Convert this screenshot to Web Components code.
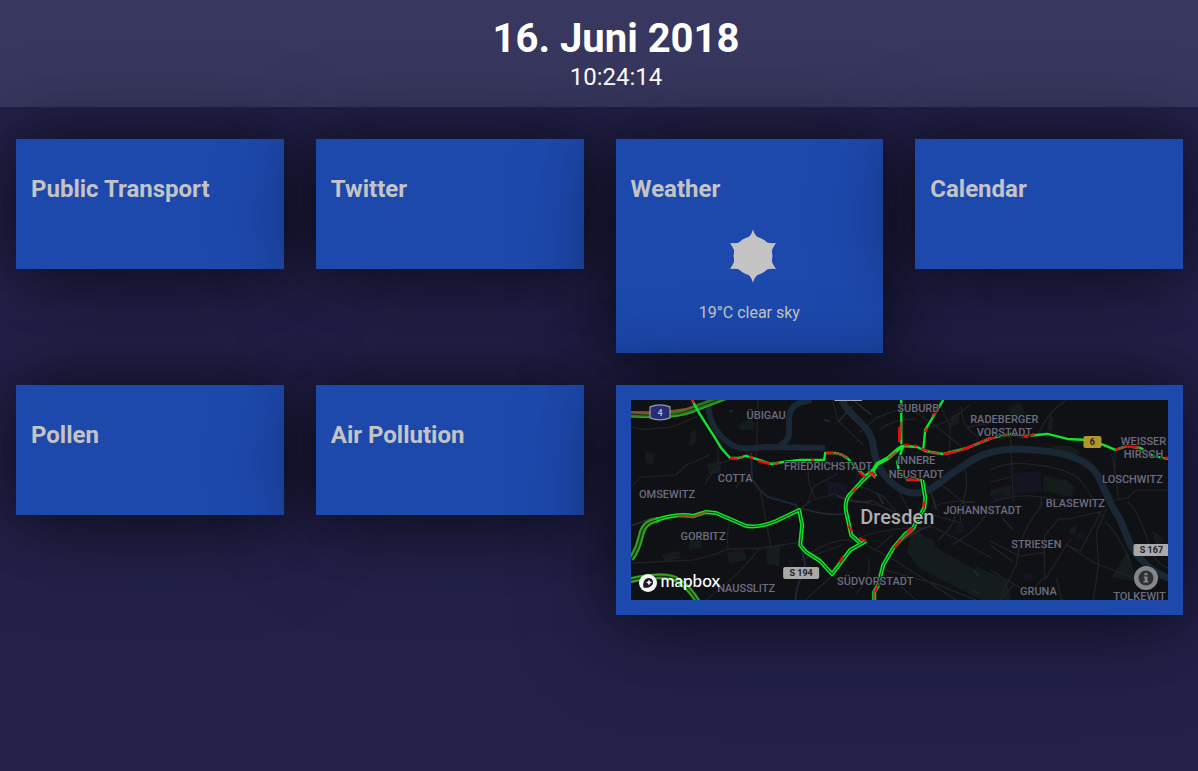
<!DOCTYPE html>
<html lang="de">
<head>
<meta charset="utf-8">
<meta name="viewport" content="width=device-width, initial-scale=1">
<title>Dashboard Dresden</title>
<style>
  html { background: #23214a; }
  body { margin: 0; font-family: Roboto, sans-serif; font-size: 16px; color: #c4c4c4; }
</style>
</head>
<body>
<dash-app></dash-app>

<template id="app-template">
  <style>
    :host { display: block; min-height: 100vh; background: #23214a; }
    main {
      display: grid;
      grid-template-columns: repeat(4, minmax(0, 1fr));
      gap: 32px;
      align-items: start;
      padding: 32px 15px 32px 16px;
    }
    .wide { grid-column: span 2; }
  </style>
  <dash-header date="16. Juni 2018" time="10:24:14"></dash-header>
  <main>
    <dash-card heading="Public Transport"></dash-card>
    <dash-card heading="Twitter"></dash-card>
    <dash-card heading="Weather"><weather-info>19°C clear sky</weather-info></dash-card>
    <dash-card heading="Calendar"></dash-card>
    <dash-card heading="Pollen"></dash-card>
    <dash-card heading="Air Pollution"></dash-card>
    <dash-card class="wide"><traffic-map></traffic-map></dash-card>
  </main>
</template>

<template id="header-template">
  <style>
    :host { display: block; background: #38375f; color: #fff; text-align: center; }
    header { padding: 15px 0 15px 34px; }
    h1 { margin: 0; font-size: 40px; line-height: 48px; font-weight: 700; }
    time { display: block; font-size: 24px; line-height: 29px; }
  </style>
  <header><h1></h1><time></time></header>
</template>

<template id="card-template">
  <style>
    :host {
      display: block;
      position: relative;
      box-sizing: border-box;
      min-height: 130px;
      padding: 15px;
      background: #1d49ad;
      box-shadow: 0 0 60px rgba(0, 0, 0, .45), 0 12px 100px rgba(0, 0, 0, .4);
    }
    h2 { margin: 20px 0 18px; font-size: 24px; line-height: 30px; font-weight: 700; }
  </style>
  <h2></h2>
  <slot></slot>
</template>

<template id="weather-template">
  <style>
    :host { display: block; padding-top: 7px; text-align: center; }
    svg { display: block; margin: 0 auto; width: 54px; height: 54px; fill: #c4c4c4; }
    p { margin: 20px 0 15px; line-height: 20px; }
  </style>
  <svg viewBox="0 0 54 54" role="img" aria-label="Sun">
    <circle cx="31" cy="27" r="19.4"/>
    <path transform="translate(1 0)" d="M30 .5Q31.8 7 37 10Q42 15 53 14Q48 21 47.5 27Q48 33 53 40Q42 39 37 44Q31.800 47 30 53.500Q28.200 47 23 44Q18 39 7 40Q12 33 12.500 27Q12 21 7 14Q18 15 23 10Q28.200 7 30 .5Z"/>
  </svg>
  <p><slot></slot></p>
</template>

<template id="map-template">
  <style>
    :host { display: block; position: relative; height: 200px; overflow: hidden; background: #101115; }
    .map { display: block; width: 100%; height: 100%; }
    .map path { fill: none; stroke-linejoin: round; stroke-linecap: butt; }
    .map .park path { fill: #141d1c; }
    .map .built path { fill: #141422; }
    .water path { stroke: #1a2735; stroke-width: 7; }
    .minor path { stroke: #222329; stroke-width: 1.2; }
    .major path { stroke: #29292f; stroke-width: 1.5; }
    .motorway path { stroke: #297c1d; stroke-width: 6; }
    .motorway .lane { stroke: #36a421; stroke-width: 1.4; }
    .motorway .gap { stroke: #142b14; stroke-width: 1; }
    .motorway .slow { stroke: #87512b; stroke-width: 2; }
    .traffic path { stroke: #0fe52a; stroke-width: 2.4; }
    .traffic .double { stroke-width: 4; }
    .traffic .gap { stroke: #143f19; stroke-width: 1; }
    .traffic .slow { stroke: #91532b; }
    .traffic .jam { stroke: #ee0810; }
    .map text { font-family: Roboto, sans-serif; text-anchor: middle; paint-order: stroke; stroke: #101115; stroke-width: 1.5; }
    .places { font-size: 11px; font-weight: 500; fill: #6c6c80; }
    .places .city { font-size: 20px; fill: #afafb1; }
    .map .signs text { font-size: 9px; font-weight: 700; stroke: none; fill: #222; }
    .logo {
      position: absolute; left: 8px; bottom: 5px;
      display: flex; align-items: center; gap: 4px;
      color: #fff; text-decoration: none;
      font: 500 17px/20px Lato, sans-serif;
    }
    .logo span { padding-bottom: 4px; }
    .logo svg { display: block; width: 18px; height: 18px; }
    button {
      position: absolute; right: 10px; bottom: 10px;
      width: 24px; height: 24px; padding: 0; border: 0; background: none;
    }
    button svg { display: block; width: 24px; height: 24px; }
  </style>
  <svg class="map" viewBox="0 0 537 200" preserveAspectRatio="xMidYMid slice" role="group" aria-label="Traffic map of Dresden">
    <g class="park">
      <path d="M280 133L287 130 294 138 301 139 304 147 368 184 373 200 350 200 288 168 276 152Z"/>
      <path d="M60 32L66 30 64 44 58 46ZM76 64L90 61 89 73 78 74ZM110 23L118 18 125 24 121 31 108 29ZM59 135L72 130 70 148 58 150ZM136 147L149 145 148 166 135 164ZM14 52L24 54 22 64 15 63ZM30 155L48 151 50 158 34 161ZM96 152L113 150 115 160 98 163Z"/>
      <path d="M412 76L435 80 444 87 440 97 412 91ZM359 90L380 85 379 96 359 96ZM420 46L440 46 449 53 438 57 421 53ZM376 8L389 3 394 14 381 18ZM320 16L328 12 328 24 318 26ZM480 177L496 151 502 170 512 183ZM520 130L533 139 525 147ZM507 143L516 146 512 154 506 150Z"/>
      <path d="M344 166L375 180 380 200 352 198ZM418 12L422 18 421 32 416 30ZM439 128L446 125 444 134 438 134Z"/>
    </g>
    <g class="built">
      <path d="M382 73L409 71 410 92 383 94ZM195 80L216 85 217 100 198 98ZM325 125L332 123 333 133 323 133ZM361 94L373 93 372 102 362 101ZM392 172L403 175 400 181 391 178ZM446 133L453 131 452 139 445 139ZM225 70L235 72 236 83 224 82ZM287 112L296 110 296 122 289 121ZM157 160L163 159 163 166 157 166Z"/>
    </g>
    <g class="minor">
      <path d="M0 26C12 33 22 27 33 28C45 28 57 19 66 17M0 86C8 83 5 75 14 77L45 75 55 65 79 55M87 46V64L120 53M127 0L125 60M74 85Q78 73 90 67M0 163C30 162 48 160 62 160Q82 156 96 149L129 148 170 142M129 148L106 174 75 200M129 90L140 148M97 148Q94 126 102 120M105 88L115 72M170 108L181 100 205 94M178 60Q174 80 184 98M175 106L183 86 206 74"/>
      <path d="M181 152Q202 138 222 140Q255 126 293 128M170 160L211 145M174 200L206 171M201 176L222 188M218 130L233 144 260 158 325 200M225 193Q243 175 236 157M244 150L261 135M251 169L305 184 345 200M267 184L285 200M214 98L252 107 267 113 300 126 327 140 360 158M225 84L251 96 265 111M240 100L271 118M257 70L281 117M292 112L329 123 329 106Q339 88 333 66M300 108Q312 101 331 101M305 82Q321 91 340 111M307 140Q321 128 325 114M320 145Q345 132 356 112M232 45L207 21 201 0M228 33L245 18 267 10M248 30Q263 18 285 19M278 8L302 24 333 49M293 29Q322 22 338 5M307 1L319 27 318 60M330 7Q330 28 348 37M335 28Q345 25 365 22"/>
      <path d="M435 0Q416 12 407 34M379 35L382 102M359 70Q379 60 405 65Q436 69 448 79L465 104M359 82L380 77M359 103Q380 93 410 97L455 103Q463 96 470 109M410 97V106Q388 132 385 165L371 193M359 141L388 156 414 152M359 170L394 191M472 111L437 119 427 119 413 136V180M400 192L411 179H414L435 145 449 151 470 111M435 145L463 163 503 178M475 109L465 132 467 164 462 200M474 122Q490 137 500 167M480 54Q485 74 487 100M484 100L496 98 505 90H537M496 102Q506 109 516 140Q520 161 537 168M382 130L371 118M368 200L382 185M484 50L483 70M505 45V57M359 145L382 162M430 200L425 178M440 138L434 146"/>
    </g>
    <g class="major">
      <path d="M0 126L21 118M207 22L221 6M205 95Q224 105 240 101M170 108Q193 116 213 114M222 0L240 15M290 80Q301 90 305 110M331 102L343 102M300 126Q286 129 270 142"/>
    </g>
    <g class="water">
      <path d="M77 0Q77 26 94 40C105 51 117 49 135 47L194 48M148 46C166 37 153 23 160 10C165 2 172 2 180 0" style="stroke-width:6"/>
      <path d="M211 0C217 18 240 24 242 46C246 78 270 93 283 93C302 93 309 80 326 70C343 58 354 51 380 49C416 50 455 53 467 77C475 93 479 106 488 118L500 147C510 162 522 173 537 178"/>
      <path style="stroke-width:2" d="M120 53L121 79Q130 93 137 97L165 105 171 125 170 145 174 164 166 188 164 200M102 10L98 12M193 20L199 21M246 93L252 104M342 169L347 176M341 190L347 193"/>
    </g>
    <g class="motorway">
      <path d="M0 14Q42 18 59 10L94-3"/>
      <path class="gap" d="M0 14Q42 18 59 10L94-3"/>
      <path class="slow" d="M0 12Q40 14 67 6"/>
      <path class="lane" d="M0 17Q43 19 60 13L96-1"/>
      <path d="M0 159Q7 149 10 135T27 120"/>
      <path class="gap" d="M0 159Q7 149 10 135T27 120"/>
      <path class="lane" d="M-2 158Q5 149 8 135T25 119M2 160Q9 150 12 136T29 121"/>
      <path d="M0 180Q37 172 48 181Q58 187 67 202"/>
      <path class="gap" d="M0 180Q37 172 48 181Q58 187 67 202"/>
      <path class="lane" d="M0 178Q38 170 50 180Q60 187 69 202M0 182Q37 174 47 183Q57 189 65 202"/>
    </g>
    <g class="traffic">
      <path d="M61 0L68 13 82 35 90 48 99 58 108 58 115 56 128 60 140 64 152 62 169 60 193 60 194 53 204 53 211 55 217 59 226 69 234 76 241 70 245 76"/>
      <path class="double" d="M25 120Q48 113 62 116L75 112 85 113 115 126Q128 128 145 121L168 110 171 125 169 145 175 152 189 161 201 174 219 150 235 141M229 143L220 135 215 112Q213 100 219 94L232 80 241 72 246 64 257 58 266 50 272 46"/>
      <path class="gap" d="M25 120Q48 113 62 116L75 112 85 113 115 126Q128 128 145 121L168 110 171 125 169 145 175 152 189 161 201 174 219 150 235 141M229 143L220 135 215 112Q213 100 219 94L232 80 241 72"/>
      <path d="M246 64L257 58 266 50 272 46 286 47 294 51 312 54 336 48 361 38 379 34 394 36 416 34 436 39 456 40 472 45 484 50 496 46 509 48 522 56 537 59"/>
      <path d="M270 0L270 44M312 0L306 10 294 30 292 50M272 46L269 55 266 62 268 73 276 79 291 80"/>
      <path class="double" d="M291 80L294 98 293 108 286 120 282 128 274 134 262 148 252 165 247 185 243 192V200"/>
      <path class="gap" d="M291 80L294 98 293 108 286 120 282 128 274 134 262 148 252 165 247 185 243 192V200"/>
      <path class="slow" d="M108 58L112 57M142 64L148 63M47 116L62 117 75 112M204 53L211 55 217 58M237 71L244 78M257 59L265 52M275 80L289 80M298 52L309 54M315 54L334 49 359 38M484 50L496 46 508 48M511 49L517 53M243 190V200M282 130L272 138M305 10L301 17M373 35L379 36M270 22L269 40"/>
      <path class="jam" d="M61 0L63 3M99 58L107 59M118 57L122 58M127 61L139 64M180 60H183M195 53L203 53M224 66L226 69M228 72L234 77M240 72L244 75M217 126L221 131M222 92L225 88M228 138L234 141M208 162L212 157M268 27V42M305 10L303 15M296 28L294 32M273 45L278 45M283 46H286M290 49L297 51M312 54L325 52M331 50L343 45M348 43L353 41M356 40L364 37M389 36L396 37 403 34M484 50L487 49M494 46L505 47M533 58H537M276 79L286 80M293 102L292 107M282 128L276 132M270 139L263 148M246 186L244 192"/>
    </g>
    <g class="places">
      <text x="135" y="19">ÜBIGAU</text>
      <text x="287" y="12">SUBURB</text>
      <text x="373" y="23">RADEBERGER</text>
      <text x="373" y="36">VORSTADT</text>
      <text x="512" y="45">WEISSER</text>
      <text x="512" y="58">HIRSCH</text>
      <text x="197" y="70">FRIEDRICHSTADT</text>
      <text x="285" y="64">INNERE</text>
      <text x="285" y="78">NEUSTADT</text>
      <text x="104" y="82">COTTA</text>
      <text x="36" y="98">OMSEWITZ</text>
      <text x="501" y="83">LOSCHWITZ</text>
      <text x="444" y="107">BLASEWITZ</text>
      <text x="351" y="114">JOHANNSTADT</text>
      <text x="72" y="140">GORBITZ</text>
      <text x="405" y="148">STRIESEN</text>
      <text x="244" y="185">SÜDVORSTADT</text>
      <text x="115" y="192">NAUSSLITZ</text>
      <text x="407" y="195">GRUNA</text>
      <text x="508" y="200">TOLKEWIT</text>
      <text class="city" x="266" y="124">Dresden</text>
    </g>
    <g class="signs">
      <path d="M19 7Q29 3 39 7V18Q29 22 19 18Z" style="fill:#252d78;stroke:#9b9ba0;stroke-width:1.2"/>
      <text x="29" y="16" style="fill:#b6b6bd">4</text>
      <rect x="203" y="-11" width="28" height="12" rx="1" fill="#a9a9a9"/>
      <rect x="152" y="167" width="36" height="12" rx="2" fill="#a9a9a9"/>
      <text x="170" y="176">S 194</text>
      <rect x="502" y="144" width="38" height="12" rx="2" fill="#a9a9a9"/>
      <text x="520" y="153">S 167</text>
      <rect x="452" y="36" width="18" height="12" rx="2" fill="#af982b"/>
      <text x="461" y="45">6</text>
    </g>
  </svg>
  <a class="logo" href="#mapbox">
    <svg viewBox="0 0 18 18" aria-hidden="true">
      <circle cx="9" cy="9" r="9" fill="#f5f5f5"/>
      <path d="M4.500 13.500C3.500 9 5.500 4 10 4A4.500 4.500 0 0 1 14 8.500C14 12.500 9 14.500 4.500 13.500Z" fill="#181a1b"/>
      <path d="M10 5.500L11 7.500 13 8.500 11 9.500 10 11.500 9 9.500 7 8.500 9 7.500Z" fill="#f5f5f5"/>
    </svg>
    <span>mapbox</span>
  </a>
  <button type="button" aria-label="Map information">
    <svg viewBox="0 0 24 24" aria-hidden="true">
      <circle cx="12" cy="12" r="12" fill="#858687"/>
      <circle cx="12" cy="12" r="7.500" fill="#303132"/>
      <path d="M10.500 7H13.500V9.300H10.500ZM9.800 10.500H13.500V15H14.500V16.500H9.500V15H10.700V12H9.800Z" fill="#858687"/>
    </svg>
  </button>
</template>

<script>
  class TemplateElement extends HTMLElement {
    constructor() {
      super();
      const template = document.getElementById(this.constructor.template);
      this.attachShadow({ mode: 'open' }).append(template.content.cloneNode(true));
    }
  }

  class DashHeader extends TemplateElement {
    static template = 'header-template';
    connectedCallback() {
      this.shadowRoot.querySelector('h1').textContent = this.getAttribute('date');
      this.shadowRoot.querySelector('time').textContent = this.getAttribute('time');
    }
  }

  class DashCard extends TemplateElement {
    static template = 'card-template';
    connectedCallback() {
      const title = this.shadowRoot.querySelector('h2');
      if (!title) return;
      if (this.hasAttribute('heading')) title.textContent = this.getAttribute('heading');
      else title.remove();
    }
  }

  class WeatherInfo extends TemplateElement { static template = 'weather-template'; }
  class TrafficMap extends TemplateElement { static template = 'map-template'; }
  class DashApp extends TemplateElement { static template = 'app-template'; }

  customElements.define('dash-header', DashHeader);
  customElements.define('dash-card', DashCard);
  customElements.define('weather-info', WeatherInfo);
  customElements.define('traffic-map', TrafficMap);
  customElements.define('dash-app', DashApp);
</script>
</body>
</html>
